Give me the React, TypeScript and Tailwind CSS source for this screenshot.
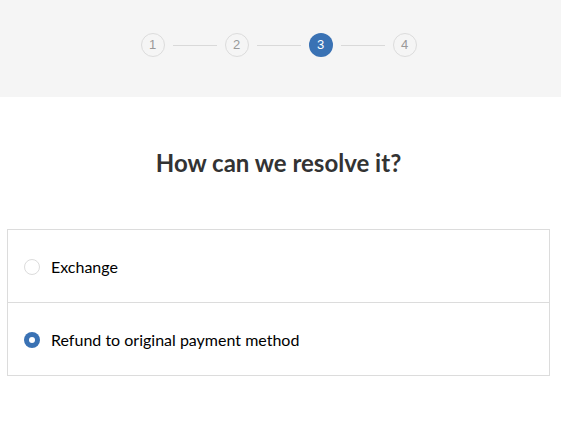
import React from "react";

const steps = [1, 2, 3, 4];

export default function App() {
  return (
    <div className="w-[561px] h-[423px] bg-white" style={{ fontFamily: "Lato, 'Liberation Sans', sans-serif" }}>
      <div className="h-[97px] bg-[#f5f5f5]">
        <div className="w-[557px] h-full flex items-center justify-center pb-[7px]">
          <div className="flex items-center">
            {steps.map((s, i) => (
              <React.Fragment key={s}>
                {i > 0 && <div className="w-[44px] h-px bg-[#d9d9d9] mx-[8px]" />}
                <div
                  className={
                    s === 3
                      ? "w-[24px] h-[24px] rounded-full bg-[#3a72b4] text-white flex items-center justify-center text-[13px]"
                      : "w-[24px] h-[24px] rounded-full border border-[#dcdcdc] text-[#999] flex items-center justify-center text-[13px]"
                  }
                  style={{ fontFamily: "'Liberation Sans', Arial, sans-serif" }}
                >
                  {s}
                </div>
              </React.Fragment>
            ))}
          </div>
        </div>
      </div>
      <div className="w-[557px]">
        <h1 className="text-center text-[24px] font-bold text-[#333] mt-[51px] leading-[30px]">How can we resolve it?</h1>
        <div className="mx-[7px] mt-[51px] border border-[#dcdcdc]">
          <div className="h-[73px] flex items-center pl-[16px] pt-[2px] border-b border-[#dcdcdc]">
            <div className="w-[16px] h-[16px] rounded-full border border-[#dcdcdc] bg-white" />
            <span className="ml-[11px] text-[16px] text-[#000]">Exchange</span>
          </div>
          <div className="h-[72px] flex items-center pl-[16px] pt-[2px]">
            <div className="w-[16px] h-[16px] rounded-full bg-[#3a72b4] flex items-center justify-center">
              <div className="w-[6px] h-[6px] rounded-full bg-white" />
            </div>
            <span className="ml-[11px] text-[16px] text-[#000]">Refund to original payment method</span>
          </div>
        </div>
      </div>
    </div>
  );
}
